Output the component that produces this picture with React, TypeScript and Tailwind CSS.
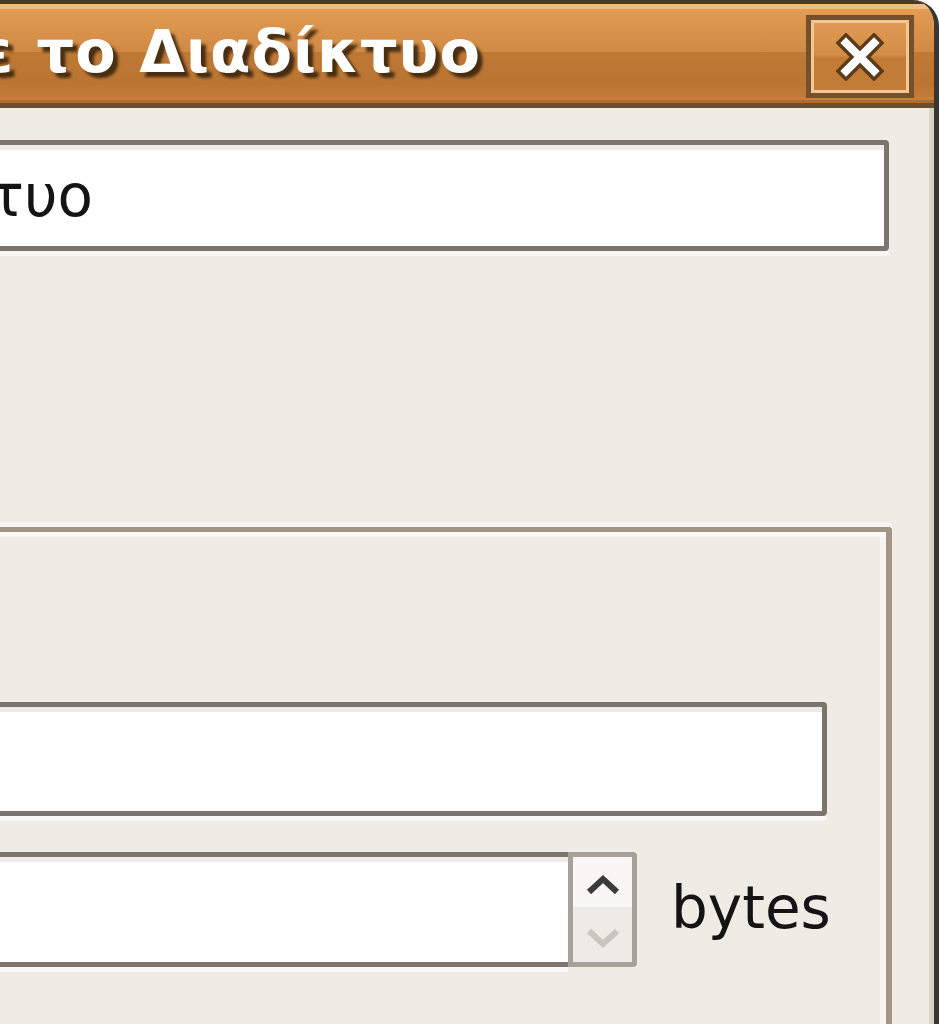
import React from 'react';

const CloseGlyph: React.FC = () => (
  <svg width="48" height="48" viewBox="0 0 48 48">
    <path d="M10 10 L38 38 M38 10 L10 38" stroke="#5a3b1a" strokeWidth="15" strokeLinecap="square" />
    <path d="M10 10 L38 38 M38 10 L10 38" stroke="#ffffff" strokeWidth="8" strokeLinecap="square" />
  </svg>
);

const Chevron: React.FC<{ up?: boolean; color: string }> = ({ up, color }) => (
  <svg width="36" height="22" viewBox="0 0 36 22">
    <path
      d={up ? 'M4 18 L18 5 L32 18' : 'M4 4 L18 17 L32 4'}
      fill="none"
      stroke={color}
      strokeWidth="6"
    />
  </svg>
);

export default function App() {
  return (
    <div className="w-[939px] h-[1024px] overflow-hidden bg-white font-['DejaVu_Sans',sans-serif]">
      <div className="h-full flex flex-col rounded-tr-[26px] overflow-hidden border-r-[5px] border-[#3a3631] bg-[#efebe5]">
        {/* Title bar */}
        <div className="h-[108px] shrink-0 flex items-center border-t-[4px] border-t-[#4a3a28] border-b-[5px] border-b-[#6b4f33] shadow-[inset_0_5px_0_#f1bd83,inset_0_-3px_0_#b06c2e] bg-[linear-gradient(to_bottom,#e6a35f_0%,#e0994f_10%,#d08a45_48%,#bf7935_49%,#bb7533_80%,#c27b36_92%,#c98545_100%)]">
          <div className="w-[481px] shrink-0 flex justify-end whitespace-nowrap text-[59px] font-bold text-white leading-none pb-[4px] tracking-[1px] [word-spacing:1px] [text-shadow:5px_5px_3px_rgba(50,32,12,0.85)]">
            Σύνδεση με το Διαδίκτυο
          </div>
          <div className="flex-1" />
          <div className="mr-[20px] mt-[6px] w-[108px] h-[83px] flex items-center justify-center border-[5px] border-[#76502a] shadow-[inset_0_0_0_3px_#f2c793] bg-[linear-gradient(to_bottom,#e09a52_0%,#d48d48_48%,#c27a36_52%,#c47d39_100%)]">
            <CloseGlyph />
          </div>
        </div>

        {/* Body */}
        <div className="flex-1 flex flex-col border-r-[5px] border-[#d8d2ca] pr-[37px]">
          {/* First entry */}
          <div className="mt-[32px] ml-[-10px] mr-[3px] h-[111px] bg-white border-[5px] border-[#7c756d] rounded-[4px] flex items-center shadow-[0_5px_0_#f8f7f5,inset_0_5px_0_#ecebe8]">
            <div className="w-[98px] shrink-0 flex justify-end whitespace-nowrap text-[58px] text-[#141414] leading-none">
              Διαδίκτυο
            </div>
          </div>

          {/* Frame */}
          <div className="mt-[276px] ml-[-10px] flex-1 border-t-[5px] border-r-[6px] border-[#a39585] rounded-tr-[4px] shadow-[0_-5px_0_#f7f5f2,inset_0_5px_0_#f9f8f6,inset_-6px_0_0_#f7f5f2] pr-[59px] flex flex-col">
            <div className="mt-[170px] h-[114px] bg-white border-[5px] border-[#7c756d] rounded-[4px] shadow-[0_5px_0_#f8f7f5,inset_0_5px_0_#ecebe8]" />

            <div className="mt-[36px] flex items-center">
              <div className="w-[578px] shrink-0 h-[115px] flex bg-white border-[5px] border-r-0 border-[#7c756d] shadow-[0_5px_0_#f8f7f5]">
                <div className="flex-1 shadow-[inset_0_5px_0_#ecebe8]" />
              </div>
              <div className="w-[69px] h-[115px] shrink-0 flex flex-col border-[5px] border-[#a7a19a] rounded-r-[4px]">
                <div className="h-[50px] bg-[#f8f7f5] flex items-center justify-center pt-[6px]">
                  <Chevron up color="#3b3b3b" />
                </div>
                <div className="flex-1 bg-[#eeebe7] flex items-center justify-center pt-[6px]">
                  <Chevron color="#c9c5bf" />
                </div>
              </div>
              <div className="ml-[34px] text-[58px] text-[#141414] leading-none pb-[4px]">bytes</div>
            </div>
          </div>
        </div>
      </div>
    </div>
  );
}
